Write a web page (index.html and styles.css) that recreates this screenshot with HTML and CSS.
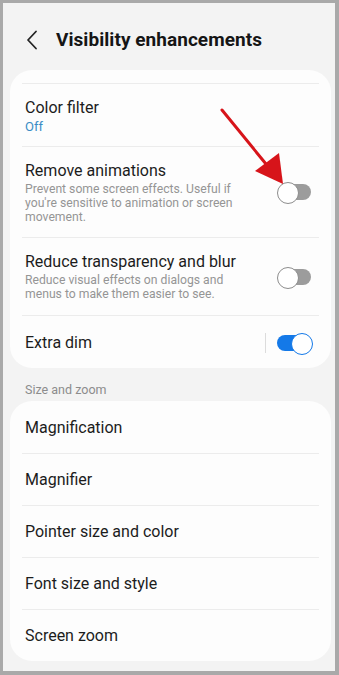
FILE: index.html
```html
<!DOCTYPE html>
<html>
<head>
<meta charset="utf-8">
<link rel="stylesheet" href="styles.css">
</head>
<body>
<div class="frame">
  <header class="topbar">
    <svg class="back" width="12" height="20" viewBox="0 0 12 20"><path d="M10 1.5 L2 10 L10 18.5" fill="none" stroke="#222" stroke-width="1.8" stroke-linecap="round" stroke-linejoin="round"/></svg>
    <h1 class="title">Visibility enhancements</h1>
  </header>

  <section class="card card-top">
    <div class="row row-first">
      <div class="text">
        <div class="label">Color filter</div>
        <div class="status">Off</div>
      </div>
    </div>
    <div class="row row-anim">
      <div class="text">
        <div class="label">Remove animations</div>
        <div class="desc">Prevent some screen effects. Useful if you're sensitive to animation or screen movement.</div>
      </div>
      <span class="switch"></span>
    </div>
    <div class="row row-blur">
      <div class="text">
        <div class="label">Reduce transparency and blur</div>
        <div class="desc">Reduce visual effects on dialogs and menus to make them easier to see.</div>
      </div>
      <span class="switch"></span>
    </div>
    <div class="row row-dim">
      <div class="text">
        <div class="label">Extra dim</div>
      </div>
      <span class="vsep"></span>
      <span class="switch on"></span>
    </div>
  </section>

  <div class="section-title">Size and zoom</div>

  <section class="card card-bottom">
    <div class="row simple"><div class="label">Magnification</div></div>
    <div class="row simple"><div class="label">Magnifier</div></div>
    <div class="row simple"><div class="label">Pointer size and color</div></div>
    <div class="row simple"><div class="label">Font size and style</div></div>
    <div class="row simple"><div class="label">Screen zoom</div></div>
  </section>

  <svg class="arrow" width="339" height="675" viewBox="0 0 339 675">
    <line x1="222" y1="110" x2="266" y2="164" stroke="#d7141a" stroke-width="3" stroke-linecap="round"/>
    <polygon points="255,171 279,153 283,184" fill="#d7141a"/>
  </svg>
</div>
</body>
</html>
```

FILE: styles.css
```css
* { box-sizing: border-box; }
html, body { margin: 0; padding: 0; }
body {
  width: 339px;
  height: 675px;
  font-family: Roboto, "Noto Sans", sans-serif;
  background: #a9a9a9;
}
.frame {
  position: relative;
  width: 339px;
  height: 675px;
  border-style: solid;
  border-color: #a9a9a9;
  border-width: 3px 4px 4px 3px;
  background: #f3f3f3;
  overflow: hidden;
}
.topbar {
  display: flex;
  align-items: center;
  height: 67px;
  padding-left: 23px;
  gap: 18px;
}
.back { margin-top: 6px; }
.title {
  margin: 6px 0 0 0;
  font-size: 19px;
  font-weight: 700;
  color: #151515;
  letter-spacing: 0.05px;
}
.card {
  background: #fdfdfd;
  border-radius: 22px;
  margin: 0 4px 0 7px;
  padding: 0 12px;
}
.card-top { padding-top: 13px; }
.card-top .row-first { border-top: 1px solid #ececec; }
.row {
  display: flex;
  align-items: center;
  padding: 0 3px;
  border-bottom: 1px solid #ececec;
}
.row:last-child { border-bottom: 0; }
.text { flex: 1; }
.label {
  font-size: 16px;
  color: #1c1c1c;
  line-height: 20px;
}
.status {
  font-size: 13px;
  color: #3a8dc5;
  line-height: 18px;
}
.desc {
  font-size: 12.2px;
  color: #959595;
  line-height: 14px;
  margin-top: 1px;
  width: 225px;
}
.row-first { height: 64px; padding-top: 4px; }
.row-anim { height: 91px; }
.row-blur { height: 78px; }
.row-dim { height: 52px; padding-top: 1px; }
.vsep {
  width: 1px;
  height: 20px;
  background: #dcdcdc;
  margin-right: 11px;
}
.switch {
  position: relative;
  width: 34px;
  height: 20px;
  flex: none;
  margin-right: 5px;
}
.switch::before {
  content: "";
  position: absolute;
  left: 2px;
  right: 0;
  top: 2px;
  height: 16px;
  border-radius: 8px;
  background: #9c9c9c;
}
.switch::after {
  content: "";
  position: absolute;
  left: 0;
  top: 0;
  width: 20px;
  height: 20px;
  border-radius: 50%;
  background: #fff;
  border: 1.5px solid #8d8d8d;
}
.switch.on::before { background: #1479e8; left: 0; right: 2px; }
.switch.on::after { left: 14px; border-color: #1479e8; }
.section-title {
  font-size: 12.5px;
  color: #8c8c8c;
  padding: 14px 0 0 22px;
  height: 33px;
}
.card-bottom { height: 260px; padding-top: 1px; }
.row.simple { height: 52px; }
.arrow {
  position: absolute;
  left: -3px;
  top: -3px;
  pointer-events: none;
}
```
